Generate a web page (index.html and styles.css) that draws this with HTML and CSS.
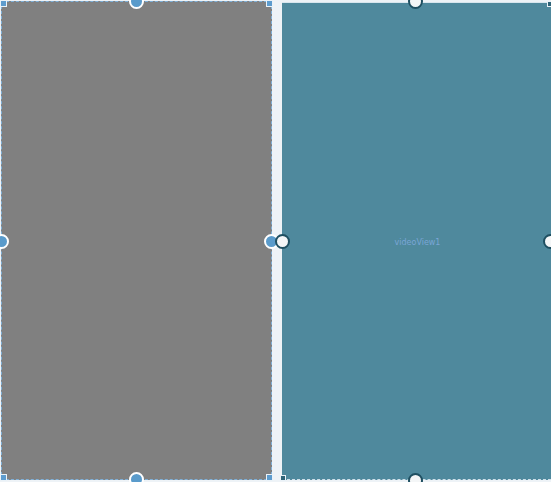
FILE: index.html
```html
<!DOCTYPE html>
<html lang="en">
<head>
    <meta charset="UTF-8">
    <title>Layout Editor</title>
    <link rel="stylesheet" href="styles.css">
</head>
<body>

<div class="canvas">
    <div class="view view-gray">
        <span class="corner tl"></span>
        <span class="corner tr"></span>
        <span class="corner bl"></span>
        <span class="corner br"></span>
        <span class="anchor top"></span>
        <span class="anchor left"></span>
        <span class="anchor right"></span>
        <span class="anchor bottom"></span>
    </div>
    <div class="view view-video">
        <span class="label">videoView1</span>
        <span class="corner tr dark"></span>
        <span class="corner bl dark"></span>
        <span class="anchor top dark"></span>
        <span class="anchor left dark"></span>
        <span class="anchor right dark"></span>
        <span class="anchor bottom dark"></span>
    </div>
</div>

</body>
</html>
```

FILE: styles.css
```css
html, body {
    margin: 0;
    padding: 0;
}

body {
    background: #eef3f7;
    font-family: 'DejaVu Sans', sans-serif;
    width: 551px;
    height: 482px;
    overflow: hidden;
}

.canvas {
    display: flex;
    gap: 10px;
    padding: 1px 0 2px 1px;
    height: 482px;
    box-sizing: border-box;
}

.view {
    position: relative;
    box-sizing: border-box;
}

.view-gray {
    width: 271px;
    background: #808080;
    border: 1px dashed #7fb0d8;
}

.view-video {
    width: 269px;
    margin-top: 1px;
    background: #4f899d;
    border-top: 1px solid #d8e6ee;
    border-bottom: 1px dashed #cfe0ea;
    display: flex;
    align-items: center;
    justify-content: center;
}

.label {
    font-size: 8px;
    color: #7aa6d6;
    margin-left: 2px;
    margin-top: 2px;
}

/* resize corners */
.corner {
    position: absolute;
    width: 5px;
    height: 5px;
    background: #5d9cce;
    border: 1px solid #eaf2f8;
}

.corner.tl { top: -2px; left: -2px; }
.corner.tr { top: -2px; right: -2px; }
.corner.bl { bottom: -2px; left: -2px; }
.corner.br { bottom: -2px; right: -2px; }

.corner.dark {
    background: #2f6478;
    width: 4px;
    height: 4px;
}

/* constraint anchors */
.anchor {
    position: absolute;
    width: 11px;
    height: 11px;
    border-radius: 50%;
    background: #5a9bcb;
    border: 2px solid #ffffff;
}

.anchor.top { top: -8px; left: 127px; }
.anchor.bottom { bottom: -8px; left: 127px; }
.anchor.left { top: 232px; left: -8px; }
.anchor.right { top: 232px; right: -8px; }

.anchor.dark {
    background: #f4f6f7;
    border-color: #1f4f61;
}

.view-video .anchor.top { left: 126px; top: -9px; }
.view-video .anchor.bottom { left: 126px; bottom: -9px; }
.view-video .anchor.left { left: -7px; top: 231px; }
.view-video .anchor.right { right: -7px; top: 231px; }
```
